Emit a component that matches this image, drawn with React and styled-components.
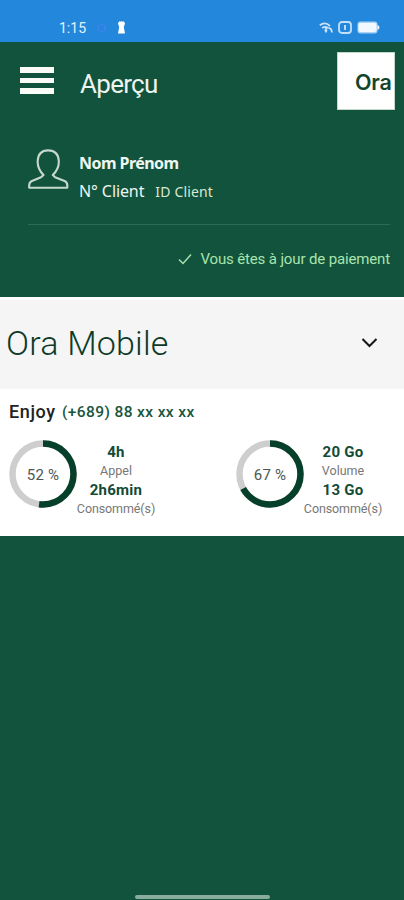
import React from 'react';
import styled, { createGlobalStyle } from 'styled-components';

const GlobalStyle = createGlobalStyle`
  * {
    box-sizing: border-box;
  }

  body {
    margin: 0;
    background-color: #11533c;
    font-family: Roboto, 'Liberation Sans', sans-serif;
  }
`;

const Screen = styled.div`
  display: flex;
  flex-direction: column;
  width: 404px;
  height: 900px;
  overflow: hidden;
  background-color: #11533c;
`;

const Label = styled.span`
  flex: none;
  white-space: nowrap;
`;

const StatusBar = styled.div`
  display: flex;
  align-items: center;
  flex: none;
  height: 42px;
  padding: 13px 24px 0 59px;
  background-color: #2387db;
  color: #e4f1fc;

  svg {
    flex: none;
  }
`;

const Clock = styled(Label)`
  width: 37px;
  font-size: 14px;
`;

const StatusIcons = styled.div`
  display: flex;
  align-items: center;
  gap: 5px;
  margin-left: auto;
`;

const Header = styled.header`
  display: flex;
  flex: none;
  height: 93px;
  padding: 10px 9px 0 20px;
`;

const MenuButton = styled.button`
  display: flex;
  flex-direction: column;
  gap: 5px;
  width: 34px;
  margin: 15px 26px 0 0;
  padding: 0;
  border: 0;
  background: none;

  span {
    height: 5.5px;
    background-color: #fbfbf7;
  }
`;

const Title = styled.h1`
  margin: 16px 0 0;
  color: #eef4ee;
  font-size: 26px;
  font-weight: 400;
  line-height: 32px;
  letter-spacing: -0.7px;
`;

const Logo = styled.div`
  width: 58px;
  height: 58px;
  margin-left: auto;
  padding: 0 0 0 17px;
  border: 1px solid #c3dacb;
  background-color: #fff;
  color: #11442c;
  font-family: Inter, sans-serif;
  font-size: 21.5px;
  font-weight: 600;
  line-height: 59px;
  letter-spacing: -0.2px;
  overflow: hidden;
  white-space: nowrap;
`;

const Profile = styled.section`
  display: flex;
  flex: none;
  height: 90px;
  margin: 0 14px 0 28px;
  padding-top: 14px;
  border-bottom: 1px solid #2a6b52;
`;

const Identity = styled.div`
  margin-left: 10px;
  color: #eff6ef;
  font-family: 'Noto Sans', 'Open Sans', sans-serif;
`;

const Name = styled.div`
  height: 28px;
  font-size: 16px;
  font-weight: 700;
  line-height: 28px;
  letter-spacing: -0.55px;
`;

const Client = styled.div`
  display: flex;
  align-items: center;
  gap: 11px;
  height: 28px;
  font-size: 16px;
  letter-spacing: -0.1px;
`;

const ClientId = styled(Label)`
  color: #d8e9d3;
  font-size: 14px;
  letter-spacing: 0.15px;
`;

const Payment = styled.div`
  display: flex;
  align-items: center;
  justify-content: flex-end;
  gap: 8px;
  flex: none;
  height: 72px;
  padding: 0 14px 4px 0;
  color: #a9e3ae;
  font-size: 15px;
  letter-spacing: -0.14px;
`;

const SectionHeader = styled.div`
  display: flex;
  align-items: center;
  justify-content: space-between;
  flex: none;
  height: 92px;
  padding: 0 26px 3px 6px;
  border-top: 3px solid #fff;
  background-color: #f5f5f5;
`;

const SectionTitle = styled.h2`
  margin: 0;
  color: #0d3b29;
  font-size: 34px;
  font-weight: 300;
  letter-spacing: 0.2px;
`;

const Plan = styled.section`
  flex: none;
  height: 147px;
  padding: 9px 9px 0;
  background-color: #fff;
`;

const PlanTitle = styled.div`
  display: flex;
  align-items: center;
  gap: 6.5px;
  height: 27px;
  color: #222;
  font-size: 18px;
  font-weight: 500;
  letter-spacing: 0.6px;
`;

const Phone = styled(Label)`
  color: #1a5540;
  font-size: 15.5px;
  letter-spacing: 0.38px;
`;

const Meters = styled.div`
  display: grid;
  grid-template-columns: 227px 1fr;
  margin-top: 15px;
`;

const Meter = styled.div`
  display: flex;
`;

const Dial = styled.div`
  display: grid;
  flex: none;
  width: 68px;
  height: 68px;

  & > * {
    grid-area: 1 / 1;
    place-self: center;
  }
`;

const Percent = styled(Label)`
  padding-top: 2px;
  color: #4c5752;
  font-size: 15px;
  letter-spacing: 0.25px;
`;

const Amounts = styled.div`
  display: flex;
  flex-direction: column;
  align-items: center;
  width: 78px;
  padding-top: 3px;
`;

const Amount = styled(Label)`
  color: #124a36;
  font-size: 15px;
  font-weight: 700;
  line-height: 19px;
  letter-spacing: 0.25px;
`;

const Caption = styled(Label)`
  padding-bottom: 1px;
  color: #777;
  font-size: 12.5px;
  line-height: 18px;
  letter-spacing: ${(props) => props.$spacing || '0'};
`;

const HomeBar = styled.div`
  flex: none;
  width: 135px;
  height: 4px;
  margin: auto auto 1px;
  border-radius: 2px;
  background-color: #88ad9c;
`;

const RADIUS = 30.5;
const LENGTH = 2 * Math.PI * RADIUS;

const Usage = ({ percent, total, kind, used }) => (
  <Meter>
    <Dial>
      <svg width="68" height="68" fill="none" strokeWidth="6.5">
        <circle cx="34" cy="34" r={RADIUS} stroke="#cecece" />
        <circle
          cx="34"
          cy="34"
          r={RADIUS}
          stroke="#07402a"
          strokeDasharray={`${(LENGTH * percent) / 100} ${LENGTH}`}
          transform="rotate(-90 34 34)"
        />
      </svg>
      <Percent>{percent} %</Percent>
    </Dial>
    <Amounts>
      <Amount>{total}</Amount>
      <Caption>{kind}</Caption>
      <Amount>{used}</Amount>
      <Caption $spacing="-0.1px">Consommé(s)</Caption>
    </Amounts>
  </Meter>
);

export default function App() {
  return (
    <Screen>
      <GlobalStyle />
      <StatusBar>
        <Clock>1:15</Clock>
        <svg width="11" height="12" fill="none" stroke="#3f83ee" strokeWidth="2">
          <circle cx="5.5" cy="6" r="3.6" strokeDasharray="2.6 1.2" />
        </svg>
        <svg width="18" height="13" fill="#fff">
          <path d="M12 .5h5L18 2.5 16.8 6l1.2 6.5h-7L12.2 6 11 2.5z" />
        </svg>
        <StatusIcons>
          <svg width="14" height="13" fill="none" stroke="#c9e2fa" strokeWidth="1.8">
            <path d="M.8 4.2C4 1.8 8 2 11 5M3.2 7c2.3-1.6 4.6-1.2 6.5.4M5.5 9.3h2.8M7 6v5.5M10 7.2c2 .3 2.8 1.8 2.8 4.3" />
          </svg>
          <svg width="14" height="13" fill="none" stroke="#c3e0fa" strokeWidth="1.8">
            <rect x="1" y="1" width="12" height="11" rx="3" />
            <path d="M7 4v5M6 5.5h2" />
          </svg>
          <svg width="23" height="13" fill="#f2f8ff">
            <rect x=".5" y=".5" width="20" height="12" rx="3" fill="#a9d2f7" />
            <rect x="1.5" y="2" width="18" height="9" rx="2" />
            <path d="M20.5 4c2.5 1 2.5 4 0 5z" />
          </svg>
        </StatusIcons>
      </StatusBar>
      <Header>
        <MenuButton aria-label="Menu">
          <span />
          <span />
          <span />
        </MenuButton>
        <Title>Aperçu</Title>
        <Logo>Ora</Logo>
      </Header>
      <Profile>
        <svg width="41" height="43" fill="none" stroke="#c5d8cc" strokeWidth="2.1">
          <path
            d="M15.5 26C11.5 22 9.4 17.5 9.7 12 10.1 4.8 14 1.4 20 1.4S30.4 4.8 30.8 12c.3 5.5-1.9 10-6 14l2.3 2.2 10.1 4.1c2 1 2.4 3 2.1 6.4H1.2c-.3-3.4.1-5.4 2.2-6.4l9.6-4.1z"
            strokeLinejoin="round"
          />
        </svg>
        <Identity>
          <Name>Nom Prénom</Name>
          <Client>
            <Label>N° Client</Label>
            <ClientId>ID Client</ClientId>
          </Client>
        </Identity>
      </Profile>
      <Payment>
        <svg width="14" height="12" fill="none" stroke="currentColor" strokeWidth="1.5">
          <path d="M1 6.5l4 4L13 1.5" />
        </svg>
        <Label>Vous êtes à jour de paiement</Label>
      </Payment>
      <SectionHeader>
        <SectionTitle>Ora Mobile</SectionTitle>
        <svg width="17" height="12" fill="none" stroke="#181818" strokeWidth="2.1">
          <path d="M1.5 2l7 7 7-7" />
        </svg>
      </SectionHeader>
      <Plan>
        <PlanTitle>
          <Label>Enjoy</Label>
          <Phone>(+689) 88 xx xx xx</Phone>
        </PlanTitle>
        <Meters>
          <Usage percent={52} total="4h" kind="Appel" used="2h6min" />
          <Usage percent={67} total="20 Go" kind="Volume" used="13 Go" />
        </Meters>
      </Plan>
      <HomeBar />
    </Screen>
  );
}
